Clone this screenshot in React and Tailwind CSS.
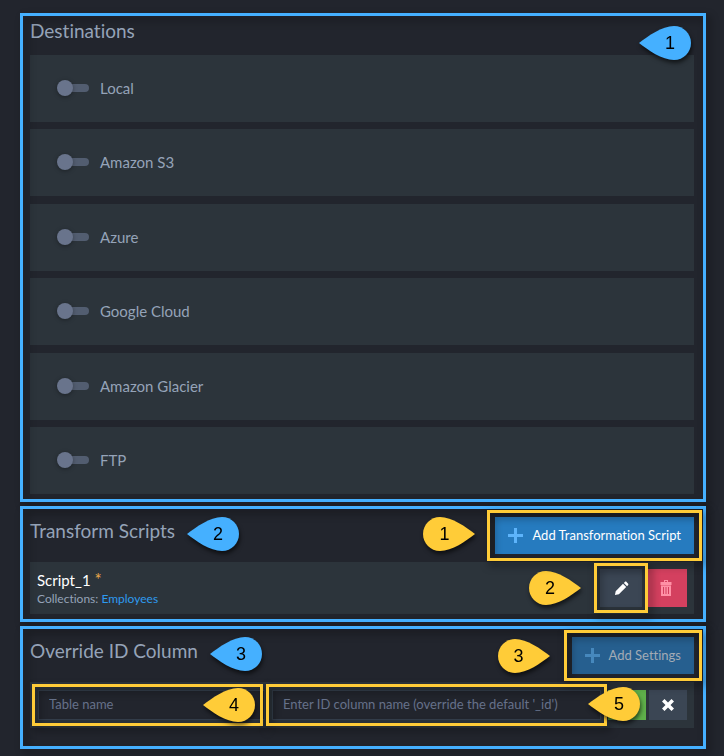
import React from "react";

const DESTINATIONS = ["Local", "Amazon S3", "Azure", "Google Cloud", "Amazon Glacier", "FTP"];

function Pin({ n, color = "blue", point = "left", className = "" }) {
  const left = point === "left";
  return (
    <span
      className={`pointer-events-none block h-[34px] w-[52px] shrink-0 drop-shadow-[1px_3px_2px_rgba(0,0,0,0.6)] ${className}`}
    >
      <span className="grid h-full w-full grid-cols-1 grid-rows-1">
        <svg
          viewBox="0 0 52 34"
          className={`col-start-1 row-start-1 h-[34px] w-[52px] ${
            color === "blue" ? "fill-[#45b0ff]" : "fill-[#ffcc38]"
          }`}
          aria-hidden="true"
        >
          <path
            d={
              left
                ? "M0 17C9 10 23 0 35 0C44.500 0 52 7.600 52 17C52 26.400 44.500 34 35 34C23 34 9 24 0 17Z"
                : "M52 17C43 10 29 0 17 0C7.500 0 0 7.600 0 17C0 26.400 7.500 34 17 34C29 34 43 24 52 17Z"
            }
          />
        </svg>
        <span
          className={`col-start-1 row-start-1 self-center text-center font-['Liberation_Sans',Arial,sans-serif] text-[18px] leading-[18px] text-black ${
            left ? "pl-[10px]" : "pr-[10px]"
          }`}
        >
          {n}
        </span>
      </span>
    </span>
  );
}

function Frame({ className }) {
  return (
    <span
      className={`pointer-events-none absolute z-10 border-[3px] border-[#ffcc38] drop-shadow-[3px_4px_4px_rgba(0,0,0,0.6)] ${className}`}
    />
  );
}

function Section({ className, children }) {
  return (
    <section className={`relative border-[3px] border-[#45b0ff] pr-[9px] pl-[7px] ${className}`}>
      <span className="pointer-events-none absolute -inset-[3px] border-[3px] border-[#45b0ff] drop-shadow-[4px_4px_4px_rgba(0,0,0,0.45)]" />
      {children}
    </section>
  );
}

function PlusIcon({ className }) {
  return (
    <svg viewBox="0 0 15 15" className={`h-[15px] w-[15px] ${className}`} aria-hidden="true">
      <path d="M6 0h3v6h6v3H9v6H6V9H0V6h6z" />
    </svg>
  );
}

function PencilIcon() {
  return (
    <svg viewBox="0 0 16 16" className="h-[15px] w-[15px] fill-white" aria-hidden="true">
      <path d="M1 15l.8-4.200L9.600 3l3.400 3.400-7.800 7.800zM10.500 2.100l1-1c.6-.6 1.300-.6 1.900 0l1.500 1.500c.6.6.6 1.300 0 1.900l-1 1z" />
    </svg>
  );
}

function TrashIcon() {
  return (
    <svg viewBox="0 0 12 16" className="h-4 w-3" aria-hidden="true">
      <path
        d="M4 0h4v2h3.500v3H.500V2H4zM5 1v1h2V1zM1 6h10v10H1zM3 7v7h1V7zM5.500 7v7h1V7zM8 7v7h1V7z"
        fill="#ff91a6"
        fillRule="evenodd"
      />
      <path d="M1 5h10v1H1z" fill="#ef7089" />
    </svg>
  );
}

function CloseIcon() {
  return (
    <svg viewBox="0 0 12 12" className="h-3 w-3 fill-white" aria-hidden="true">
      <path d="M2.500 0L6 3.500 9.500 0 12 2.500 8.500 6 12 9.500 9.500 12 6 8.500 2.500 12 0 9.500 3.500 6 0 2.500z" />
    </svg>
  );
}

const heading = "text-[19px] leading-[28px] text-[#95a3b8]";
const field =
  "block h-[30px] w-full border border-[#343e4b] bg-[#22252d] px-[10px] pb-[2px] text-[13px] text-[#95a3b8] outline-none placeholder:text-[#66718a]";

export default function App() {
  return (
    <main className="flex min-h-screen flex-col gap-1 bg-[#22252d] pt-[13px] pr-[18px] pb-2 pl-5 font-[Lato,sans-serif] [font-variant-ligatures:none]">
      <Section className="pb-[5px]">
        <h2 className={`${heading} pt-px pb-[10px]`}>Destinations</h2>
        <Pin n={1} className="absolute top-[10px] right-3" />
        <ul>
          {DESTINATIONS.map((name) => (
            <li key={name} className="bg-[#2c343b] not-last:even:mb-2 odd:mb-[7px]">
              <label className="flex h-[67px] items-center gap-[11px] pl-[27px] text-[15px] text-[#95a3b8]">
                <input
                  type="checkbox"
                  role="switch"
                  className="mb-[2px] flex h-4 w-8 appearance-none items-center before:z-10 before:h-4 before:w-4 before:shrink-0 before:rounded-full before:bg-[#69748c] before:shadow-[0_1px_4px_rgba(0,0,0,0.35)] after:-ml-3 after:h-2 after:w-7 after:shrink-0 after:rounded-full after:bg-[#525d70]"
                />
                {name}
              </label>
            </li>
          ))}
        </ul>
      </Section>

      <Section className="pt-2 pb-[5px]">
        <div className="mb-2 flex justify-between">
          <div className="flex gap-3">
            <h2 className={heading}>Transform Scripts</h2>
            <Pin n={2} />
          </div>
          <div className="flex gap-5">
            <Pin n={1} color="yellow" point="right" />
            <div className="relative">
              <button
                type="button"
                className="flex h-[37px] items-center gap-[9px] bg-[#267bbf] px-[13px] text-[13px] text-white"
              >
                <PlusIcon className="fill-[#5db4fb]" />
                Add Transformation Script
              </button>
              <Frame className="-inset-x-2 -inset-y-[7px]" />
            </div>
          </div>
        </div>
        <div className="flex h-[52px] items-center bg-[#2c343b] px-[7px]">
          <div className="flex-1">
            <p className="text-[15px] leading-[19px] text-white">
              Script_1 <span className="text-[17px] text-[#e9a84c]">*</span>
            </p>
            <p className="text-[12px] leading-[17px] text-[#95a3b8]">
              Collections:{" "}
              <a href="#employees" className="text-[#2e9bf0]">
                Employees
              </a>
            </p>
          </div>
          <Pin n={2} color="yellow" point="right" className="mr-[19px]" />
          <div className="flex gap-[3px]">
            <div className="relative">
              <button
                type="button"
                aria-label="Edit script"
                className="flex h-[38px] w-[42px] items-center justify-center bg-[#3b4654]"
              >
                <PencilIcon />
              </button>
              <Frame className="-inset-[6px]" />
            </div>
            <button
              type="button"
              aria-label="Delete script"
              className="flex h-[38px] w-[42px] items-center justify-center bg-[#d4405f]"
            >
              <TrashIcon />
            </button>
          </div>
        </div>
      </Section>

      <Section className="pt-2 pb-[18px]">
        <div className="mb-2 flex justify-between">
          <div className="flex gap-3">
            <h2 className={heading}>Override ID Column</h2>
            <Pin n={3} />
          </div>
          <div className="flex items-center gap-[22px]">
            <Pin n={3} color="yellow" point="right" />
            <div className="relative">
              <button
                type="button"
                disabled
                className="flex h-[37px] items-center gap-[9px] bg-[#265f8f] px-[13px] text-[13px] text-[#a3abb5]"
              >
                <PlusIcon className="fill-[#4688bd]" />
                Add Settings
              </button>
              <Frame className="-inset-x-2 -inset-y-[7px]" />
            </div>
          </div>
        </div>
        <div className="flex items-center bg-[#2c343b] py-2 pr-[7px] pl-2">
          <div className="relative mr-[7px] flex-[227]">
            <input type="text" aria-label="Table name" placeholder="Table name" className={field} />
            <Frame className="-inset-y-[6px] right-[2px] -left-[6px]" />
            <Pin n={4} color="yellow" className="absolute -top-[2px] right-[10px] z-20" />
          </div>
          <div className="relative mr-[7px] flex-[329]">
            <input
              type="text"
              aria-label="ID column name"
              placeholder="Enter ID column name (override the default '_id')"
              className={field}
            />
            <Frame className="-inset-[6px]" />
            <Pin n={5} color="yellow" className="absolute -top-[3px] -right-[39px] z-20" />
          </div>
          <button type="button" aria-label="Save" className="mr-[3px] h-[30px] w-[38px] bg-[#5fb04a]" />
          <button
            type="button"
            aria-label="Cancel"
            className="flex h-[30px] w-[38px] items-center justify-center bg-[#3b4654]"
          >
            <CloseIcon />
          </button>
        </div>
      </Section>
    </main>
  );
}
